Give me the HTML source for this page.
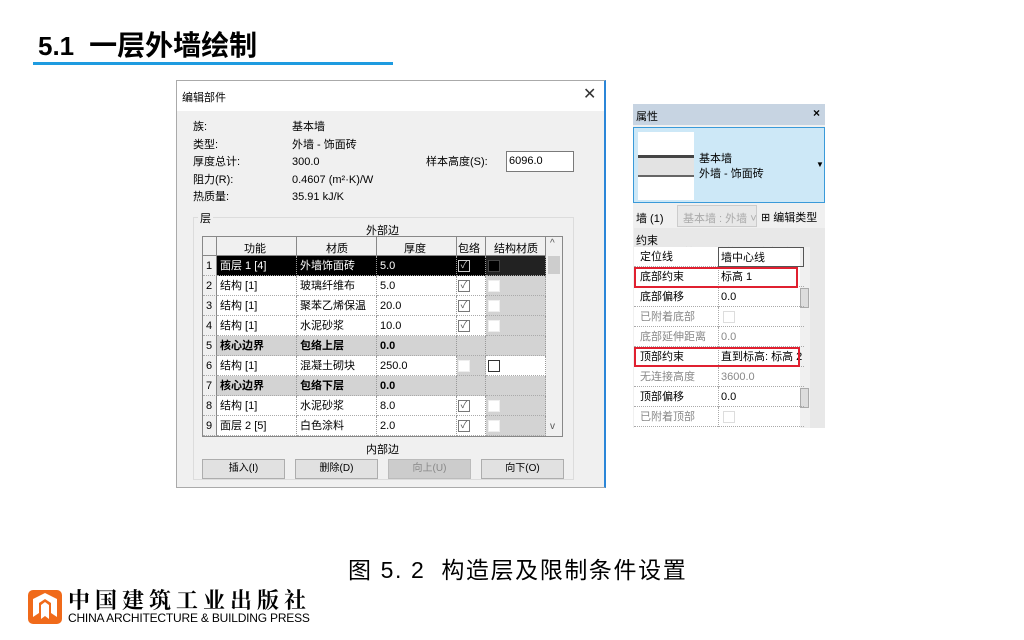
<!DOCTYPE html>
<html><head><meta charset="utf-8"><style>
*{margin:0;padding:0;box-sizing:border-box}
body{width:1024px;height:640px;background:#fff;position:relative;overflow:hidden;font-family:"Liberation Sans","Noto Sans CJK SC",sans-serif;color:#000}
.a{position:absolute;white-space:nowrap}
.s{font-size:11px}
.cell{position:absolute;height:20px;line-height:20px;font-size:11px;padding-left:3px;border-right:1px dotted #999;border-bottom:1px dotted #aaa;overflow:hidden;white-space:nowrap}
.cb{position:absolute;width:12px;height:12px;border:1px solid #777;background:#fff}
.btn{position:absolute;top:459px;width:83px;height:20px;border:1px solid #adadad;background:#e1e1e1;font-size:10px;text-align:center;line-height:18px}
.pr{position:absolute;left:634px;width:170px;height:20px;font-size:11px;line-height:20px;border-bottom:1px dotted #aaa}
.pr span{position:absolute;left:6px}
.pr b{position:absolute;left:84px;font-weight:normal;border-left:1px dotted #aaa;padding-left:2px;height:20px;width:86px}
.hl{position:absolute;top:237px;width:1px;height:19px;background:#888}
</style></head><body>
<div class="a" style="left:38px;top:24px;font-size:28px;font-weight:bold"><span style="font-size:26px">5.1&nbsp;</span> 一层外墙绘制</div>
<div class="a" style="left:33px;top:62px;width:360px;height:3px;background:#1e9be0"></div>

<div class="a" style="left:176px;top:80px;width:430px;height:408px;background:#f0f0f0;border:1px solid #aaa;border-right:2px solid #2b86d8"></div>
<div class="a" style="left:177px;top:81px;width:427px;height:30px;background:#fff"></div>
<div class="a s" style="left:182px;top:89px">编辑部件</div>
<div class="a" style="left:583px;top:84px;font-size:16px;color:#333">✕</div>
<div class="a s" style="left:193px;top:119px;line-height:17.5px">族:<br>类型:<br>厚度总计:<br>阻力(R):<br>热质量:</div>
<div class="a s" style="left:292px;top:119px;line-height:17.5px">基本墙<br>外墙 - 饰面砖<br>300.0<br>0.4607 (m²·K)/W<br>35.91 kJ/K</div>
<div class="a s" style="left:426px;top:153px">样本高度(S):</div>
<div class="a s" style="left:506px;top:151px;width:68px;height:21px;border:1px solid #7a7a7a;background:#fff;padding:3px 2px">6096.0</div>
<div class="a" style="left:193px;top:217px;width:381px;height:263px;border:1px solid #dcdcdc"></div>
<div class="a s" style="left:198px;top:210px;background:#f0f0f0;padding:0 2px">层</div>
<div class="a s" style="left:366px;top:222px">外部边</div>
<div class="a s" style="left:366px;top:441px">内部边</div>

<div class="a" style="left:202px;top:236px;width:361px;height:201px;background:#fff;border:1px solid #888"></div>
<div class="a" style="left:203px;top:237px;width:343px;height:19px;background:#f0f0f0;border-bottom:1px solid #888"></div>
<div class="hl" style="left:216px"></div><div class="hl" style="left:296px"></div><div class="hl" style="left:376px"></div><div class="hl" style="left:456px"></div><div class="hl" style="left:485px"></div><div class="hl" style="left:545px"></div>
<div class="a s" style="left:244px;top:240px">功能</div>
<div class="a s" style="left:326px;top:240px">材质</div>
<div class="a s" style="left:404px;top:240px">厚度</div>
<div class="a s" style="left:458px;top:240px">包络</div>
<div class="a s" style="left:494px;top:240px">结构材质</div>
<div class="a" style="left:546px;top:237px;width:16px;height:199px;background:#f0f0f0"></div>
<div class="a" style="left:548px;top:256px;width:12px;height:18px;background:#cdcdcd"></div>
<div class="a" style="left:550px;top:238px;font-size:10px;color:#555">^</div>
<div class="a" style="left:550px;top:421px;font-size:10px;color:#555">v</div>
<div id="rows"></div>
<script>
var rows=[["面层 1 [4]","外墙饰面砖","5.0",1,0],["结构 [1]","玻璃纤维布","5.0",1,0],["结构 [1]","聚苯乙烯保温","20.0",1,0],["结构 [1]","水泥砂浆","10.0",1,0],["核心边界","包络上层","0.0",2,0],["结构 [1]","混凝土砌块","250.0",0,1],["核心边界","包络下层","0.0",2,0],["结构 [1]","水泥砂浆","8.0",1,0],["面层 2 [5]","白色涂料","2.0",1,0]];
var h="";
rows.forEach(function(r,i){var y=256+i*20;var sel=i==0,core=r[3]==2;
var bg=sel?"#000":(core?"#d3d3d3":"#fff"),fc=sel?"#fff":"#000",fw=core?"bold":"normal";
h+='<div class="cell" style="left:203px;top:'+y+'px;width:14px;background:#f0f0f0;border-right:1px solid #888">'+(i+1)+'</div>';
var cols=[[217,80,r[0]],[297,80,r[1]],[377,80,r[2]]];
cols.forEach(function(c){h+='<div class="cell" style="left:'+c[0]+'px;top:'+y+'px;width:'+c[1]+'px;background:'+bg+';color:'+fc+';font-weight:'+fw+'">'+c[2]+'</div>'});
h+='<div class="cell" style="left:457px;top:'+y+'px;width:29px;background:'+(sel?'#000':(r[3]==1?'#fff':'#d3d3d3'))+'"></div>';
h+='<div class="cell" style="left:486px;top:'+y+'px;width:60px;background:'+(sel?'#222':(r[4]?'#fff':'#d3d3d3'))+'"></div>';
if(r[3]==1)h+='<div class="cb" style="left:458px;top:'+(y+4)+'px;'+(sel?'background:#000;border-color:#ccc;color:#ccc':'color:#555')+';font-size:10px;line-height:10px;text-align:center">✓</div>';
if(r[3]==0)h+='<div class="cb" style="left:458px;top:'+(y+4)+'px;border-color:#eee"></div>';
if(!core)h+='<div class="cb" style="left:488px;top:'+(y+4)+'px;'+(sel?'background:#000;border-color:#444':(r[4]?'border-color:#333':'border-color:#eee'))+'"></div>';
});
document.getElementById("rows").innerHTML=h;
</script>
<div class="btn" style="left:202px">插入(I)</div>
<div class="btn" style="left:295px">删除(D)</div>
<div class="btn" style="left:388px;background:#ccc;color:#888;border-color:#bbb">向上(U)</div>
<div class="btn" style="left:481px">向下(O)</div>

<div class="a" style="left:633px;top:104px;width:192px;height:324px;background:#f0f0f0"></div>
<div class="a" style="left:633px;top:104px;width:192px;height:21px;background:#c7d4e2"></div>
<div class="a s" style="left:636px;top:108px">属性</div>
<div class="a" style="left:813px;top:106px;font-size:12px;font-weight:bold">×</div>
<div class="a" style="left:633px;top:127px;width:192px;height:76px;background:#cde8f7;border:1px solid #3a9ad9"></div>
<div class="a" style="left:638px;top:132px;width:56px;height:68px;background:#fff"></div>
<div class="a" style="left:638px;top:155px;width:56px;height:22px;background:#e3e3e3;border-top:3px solid #444;border-bottom:2px solid #666"></div>
<div class="a s" style="left:699px;top:152px;line-height:15px">基本墙<br>外墙 - 饰面砖</div>
<div class="a" style="left:816px;top:160px;font-size:8px">▼</div>
<div class="a s" style="left:636px;top:210px">墙 (1)</div>
<div class="a" style="left:677px;top:205px;width:80px;height:22px;background:#e8e8e8;border:1px solid #ccc"></div>
<div class="a s" style="left:683px;top:210px;color:#aaa">基本墙 : 外墙 ˅</div>
<div class="a s" style="left:761px;top:209px">⊞ 编辑类型</div>
<div class="a" style="left:634px;top:228px;width:176px;height:19px;background:#e8e8e8"></div>
<div class="a s" style="left:636px;top:232px">约束</div>
<div class="a s" style="left:684px;top:244px;color:#ccc">按 F1 键获得更多帮助</div>
<div class="a" style="left:810px;top:228px;width:15px;height:200px;background:#e8e8e8"></div>
<div class="a" style="left:800px;top:288px;width:9px;height:20px;background:#ddd;border:1px solid #aaa"></div>
<div class="a" style="left:800px;top:388px;width:9px;height:20px;background:#ddd;border:1px solid #aaa"></div>
<div class="a" style="left:634px;top:247px;width:166px;height:181px;background:#fff"></div>
<div class="pr" style="top:247px"><span>定位线</span><b style="border:1px solid #555">墙中心线</b></div>
<div class="pr" style="top:267px"><span>底部约束</span><b>标高 1</b></div>
<div class="pr" style="top:287px"><span>底部偏移</span><b>0.0</b></div>
<div class="pr" style="top:307px;color:#888"><span>已附着底部</span><b><i class="cb" style="left:4px;top:4px;border-color:#ddd"></i></b></div>
<div class="pr" style="top:327px;color:#888"><span>底部延伸距离</span><b>0.0</b></div>
<div class="pr" style="top:347px"><span>顶部约束</span><b>直到标高: 标高 2</b></div>
<div class="pr" style="top:367px;color:#888"><span>无连接高度</span><b>3600.0</b></div>
<div class="pr" style="top:387px"><span>顶部偏移</span><b>0.0</b></div>
<div class="pr" style="top:407px;color:#888"><span>已附着顶部</span><b><i class="cb" style="left:4px;top:4px;border-color:#ddd"></i></b></div>
<div class="a" style="left:634px;top:267px;width:164px;height:21px;border:2px solid #e02030"></div>
<div class="a" style="left:634px;top:347px;width:166px;height:20px;border:2px solid #e02030"></div>

<div class="a" style="left:348px;top:551px;font-size:23px;letter-spacing:1.6px">图 5. 2&nbsp; 构造层及限制条件设置</div>

<svg class="a" style="left:27px;top:589px" width="36" height="36" viewBox="0 0 36 36"><rect x="1" y="1" width="34" height="34" rx="5" fill="#f06a1a"/><path d="M6 10 L18 4 L30 10 L30 28 L24 24 L24 14 L18 10 L12 14 L12 24 L6 28Z M14 16 L18 13 L22 16 L22 30 L18 27 L14 30Z" fill="#fff"/></svg>
<div class="a" style="left:68px;top:584px;font-size:22px;font-weight:bold;letter-spacing:5px;font-family:'Noto Serif CJK SC',serif">中国建筑工业出版社</div>
<div class="a" style="left:68px;top:611px;font-size:12px;letter-spacing:-0.2px">CHINA ARCHITECTURE &amp; BUILDING PRESS</div>
</body></html>
